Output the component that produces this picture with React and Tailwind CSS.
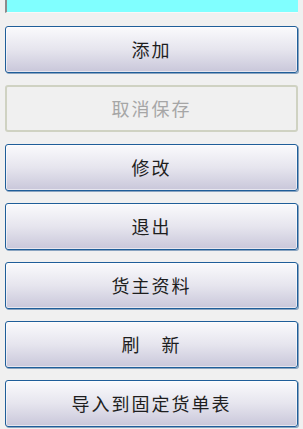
const buttons = [
  { label: '添加' },
  { label: '取消保存', disabled: true },
  { label: '修改' },
  { label: '退出' },
  { label: '货主资料' },
  { label: '刷　新' },
  { label: '导入到固定货单表' },
]

function ActionButton({ label, disabled }) {
  if (disabled) {
    return (
      <button
        type="button"
        disabled
        className="flex h-[47px] w-full items-center justify-center rounded-[3px] border-2 border-[#cfd2c2] bg-[#f0f0f0] text-[18px] tracking-[2px] text-[#a6a6a6]"
      >
        {label}
      </button>
    )
  }
  return (
    <button
      type="button"
      className="flex h-[47px] w-full items-center justify-center rounded-[3px] border border-[#1f5e99] bg-gradient-to-b from-[#fafafc] via-[#e6e5ee] to-[#c9c7da] text-[18px] tracking-[2px] text-[#1e1e1e] shadow-[inset_0_0_0_1px_rgba(255,255,255,0.55),1px_1px_0_#8aa4c0]"
    >
      {label}
    </button>
  )
}

export default function App() {
  return (
    <div
      className="h-[429px] w-[303px] overflow-hidden bg-[#f0f0f0] px-[5px]"
      style={{ fontFamily: '"Noto Sans CJK SC", "Noto Sans", sans-serif' }}
    >
      <div className="h-[13px] border-b border-l-2 border-b-[#f8f8f8] border-l-[#8c8c8c] bg-[#80ffff]" />
      <div className="mt-[13px] flex flex-col gap-[12px]">
        {buttons.map(b => (
          <ActionButton key={b.label} {...b} />
        ))}
      </div>
    </div>
  )
}
